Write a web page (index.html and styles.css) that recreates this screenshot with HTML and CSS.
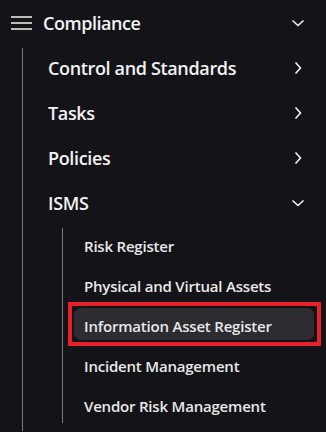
FILE: index.html
```html
<!DOCTYPE html>
<html>
<head>
<meta charset="utf-8">
<link rel="stylesheet" href="styles.css">
</head>
<body>
<nav class="sidebar">
  <div class="header">
    <svg class="burger" width="21" height="14" viewBox="0 0 21 14"><path d="M0 1H21M0 7H21M0 13H21" stroke="#f2f2f2" stroke-width="1.6" fill="none"/></svg>
    <span class="header-title">Compliance</span>
    <svg class="chev" width="16" height="16" viewBox="0 0 16 16"><path d="M2.5 5.5L8 10.5L13.5 5.5" stroke="#f2f2f2" stroke-width="1.6" fill="none"/></svg>
  </div>
  <div class="group">
    <div class="item"><span class="label">Control and Standards</span><svg class="chev" width="16" height="16" viewBox="0 0 16 16"><path d="M5.5 2.5L10.5 8L5.5 13.5" stroke="#f2f2f2" stroke-width="1.6" fill="none"/></svg></div>
    <div class="item"><span class="label">Tasks</span><svg class="chev" width="16" height="16" viewBox="0 0 16 16"><path d="M5.5 2.5L10.5 8L5.5 13.5" stroke="#f2f2f2" stroke-width="1.6" fill="none"/></svg></div>
    <div class="item"><span class="label">Policies</span><svg class="chev" width="16" height="16" viewBox="0 0 16 16"><path d="M5.5 2.5L10.5 8L5.5 13.5" stroke="#f2f2f2" stroke-width="1.6" fill="none"/></svg></div>
    <div class="item"><span class="label">ISMS</span><svg class="chev" width="16" height="16" viewBox="0 0 16 16"><path d="M2.5 5.5L8 10.5L13.5 5.5" stroke="#f2f2f2" stroke-width="1.6" fill="none"/></svg></div>
    <div class="subgroup">
      <div class="subitem">Risk Register</div>
      <div class="subitem">Physical and Virtual Assets</div>
      <div class="subitem active">Information Asset Register</div>
      <div class="subitem">Incident Management</div>
      <div class="subitem">Vendor Risk Management</div>
    </div>
  </div>
</nav>
</body>
</html>
```
FILE: styles.css
```css
html, body {
  margin: 0;
  padding: 0;
  background: #141418;
}
body {
  font-family: "Open Sans", "Noto Sans", sans-serif;
  font-weight: 600;
  color: #f2f2f2;
  width: 326px;
  height: 432px;
  overflow: hidden;
}
.header {
  display: flex;
  align-items: center;
  height: 45px;
  padding: 0 20px 0 11px;
}
.burger {
  flex: none;
  margin-right: 11px;
}
.header-title {
  flex: 1;
  font-size: 18px;
  line-height: 24px;
  letter-spacing: -0.45px;
}
.chev {
  flex: none;
  display: block;
}
.group {
  margin: 3px 0 0 22px;
  border-left: 1px solid #7c7c80;
  display: flex;
  flex-direction: column;
  gap: 5px;
  padding-bottom: 8px;
}
.item {
  display: flex;
  align-items: center;
  height: 40px;
  padding: 0 20px 0 25px;
}
.label {
  flex: 1;
  font-size: 18px;
  line-height: 40px;
  letter-spacing: -0.35px;
}
.subgroup {
  margin-left: 39px;
  border-left: 1px solid #7c7c80;
  display: flex;
  flex-direction: column;
  gap: 8px;
  padding-bottom: 3px;
}
.subitem {
  position: relative;
  margin: 0 12px 0 11px;
  height: 32px;
  box-sizing: border-box;
  padding: 6px 0 2px 10px;
  font-size: 15px;
  line-height: 24px;
  letter-spacing: -0.2px;
  color: #e8e8e8;
  border-radius: 7px;
}
.subitem.active {
  background: #2c2c31;
}
.subitem.active::after {
  content: "";
  position: absolute;
  top: -6px;
  bottom: -6px;
  left: -6px;
  right: -7px;
  border: 4px solid #e8202a;
}
```
